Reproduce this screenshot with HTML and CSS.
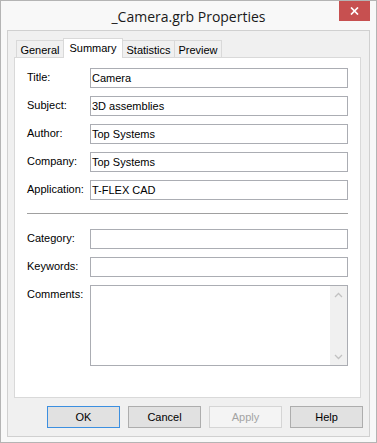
FILE: index.html
```html
<!DOCTYPE html>
<html lang="en">
<head>
    <meta charset="UTF-8">
    <title>_Camera.grb Properties</title>
    <link rel="stylesheet" href="styles.css">
</head>
<body>
    <div class="window">
        <div class="titlebar">
            <span class="title">_Camera.grb Properties</span>
            <div class="close-btn">
                <svg width="9" height="8" viewBox="0 0 9 8">
                    <path d="M1 0.5 L8 7.5 M8 0.5 L1 7.5" stroke="#fff" stroke-width="1.7" fill="none"/>
                </svg>
            </div>
        </div>

        <div class="client">
            <div class="tabs">
                <div class="tab tab-general">General</div>
                <div class="tab tab-summary active">Summary</div>
                <div class="tab tab-statistics">Statistics</div>
                <div class="tab tab-preview">Preview</div>
            </div>

            <div class="panel">
                <div class="fields">
                    <label>Title:</label>
                    <div class="field">Camera</div>
                    <label>Subject:</label>
                    <div class="field">3D assemblies</div>
                    <label>Author:</label>
                    <div class="field">Top Systems</div>
                    <label>Company:</label>
                    <div class="field">Top Systems</div>
                    <label>Application:</label>
                    <div class="field">T-FLEX CAD</div>
                </div>

                <div class="separator"></div>

                <div class="fields">
                    <label>Category:</label>
                    <div class="field"></div>
                    <label>Keywords:</label>
                    <div class="field"></div>
                    <label>Comments:</label>
                    <div class="field comments">
                        <div class="scrollbar">
                            <svg width="9" height="6" viewBox="0 0 9 6">
                                <path d="M1 5 L4.5 1.5 L8 5" stroke="#c2c2c2" stroke-width="1.3" fill="none"/>
                            </svg>
                            <svg width="9" height="6" viewBox="0 0 9 6">
                                <path d="M1 1 L4.5 4.5 L8 1" stroke="#c2c2c2" stroke-width="1.3" fill="none"/>
                            </svg>
                        </div>
                    </div>
                </div>
            </div>

            <div class="buttons">
                <div class="button default">OK</div>
                <div class="button">Cancel</div>
                <div class="button disabled">Apply</div>
                <div class="button">Help</div>
            </div>
        </div>
    </div>
</body>
</html>
```

FILE: styles.css
```css
/* Win8 style properties dialog */
body {
    margin: 0;
    padding: 0;
    font-family: "Liberation Sans", Arial, sans-serif;
    font-size: 11px;
    color: #000;
    background: #fff;
}

.window {
    width: 377px;
    height: 443px;
    box-sizing: border-box;
    border: 1px solid #b4b4b4;
    background-color: #f8f8f8;
    position: relative;
}

.titlebar {
    height: 29px;
    display: flex;
    align-items: center;
    justify-content: center;
}

.title {
    font-family: "Open Sans", "Noto Sans", sans-serif;
    font-size: 14px;
    color: #1a1a1a;
    margin-top: 1px;
}

.close-btn {
    position: absolute;
    top: 0;
    right: 6px;
    width: 31px;
    height: 20px;
    background-color: #c75050;
    display: flex;
    align-items: center;
    justify-content: center;
}

.client {
    margin: 0 6px 6px;
    height: 407px;
    box-sizing: border-box;
    border: 1px solid #d0d0d0;
    background-color: #f0f0f0;
}

/* Tabs */
.tabs {
    display: flex;
    align-items: flex-end;
    height: 19px;
    margin: 7px 0 0 8px;
}

.tab {
    height: 17px;
    box-sizing: border-box;
    border: 1px solid #d9d9d9;
    border-bottom: none;
    background-color: #f0f0f0;
    display: flex;
    align-items: center;
    justify-content: center;
    padding-top: 1px;
}

.tab + .tab {
    margin-left: -1px;
}

.tab-general { width: 48px; }
.tab-summary { width: 60px; }
.tab-statistics { width: 53px; }
.tab-preview { width: 48px; }

.tab.active {
    height: 20px;
    margin-bottom: -1px;
    background-color: #fff;
    position: relative;
    z-index: 1;
    padding-top: 0;
    padding-bottom: 2px;
}

/* Panel */
.panel {
    margin-left: 6px;
    width: 347px;
    height: 341px;
    box-sizing: border-box;
    border: 1px solid #d9d9d9;
    background-color: #fff;
    padding: 10px 12px 0;
}

.fields {
    display: grid;
    grid-template-columns: 63px 258px;
    row-gap: 8px;
}

label {
    padding-top: 3px;
    line-height: 13px;
}

.field {
    height: 20px;
    box-sizing: border-box;
    border: 1px solid #abadb3;
    padding: 3px 0 0 1px;
    line-height: 13px;
    background-color: #fff;
}

.field.comments {
    height: 81px;
    padding: 0;
    display: flex;
    justify-content: flex-end;
}

.scrollbar {
    width: 17px;
    background-color: #f0f0f0;
    display: flex;
    flex-direction: column;
    justify-content: space-between;
    align-items: center;
    padding: 6px 0 5px;
}

.separator {
    height: 1px;
    background-color: #a0a0a0;
    margin: 13px 0 15px;
}

/* Bottom buttons */
.buttons {
    display: flex;
    justify-content: flex-end;
    gap: 8px;
    margin: 8px 6px 0 0;
}

.button {
    width: 73px;
    height: 22px;
    box-sizing: border-box;
    border: 1px solid #adadad;
    background-color: #e1e1e1;
    display: flex;
    align-items: center;
    justify-content: center;
}

.button.default {
    border-color: #3c8fe0;
}

.button.disabled {
    border-color: #d5d5d5;
    background-color: #f4f4f4;
    color: #a3a3a3;
}
```
